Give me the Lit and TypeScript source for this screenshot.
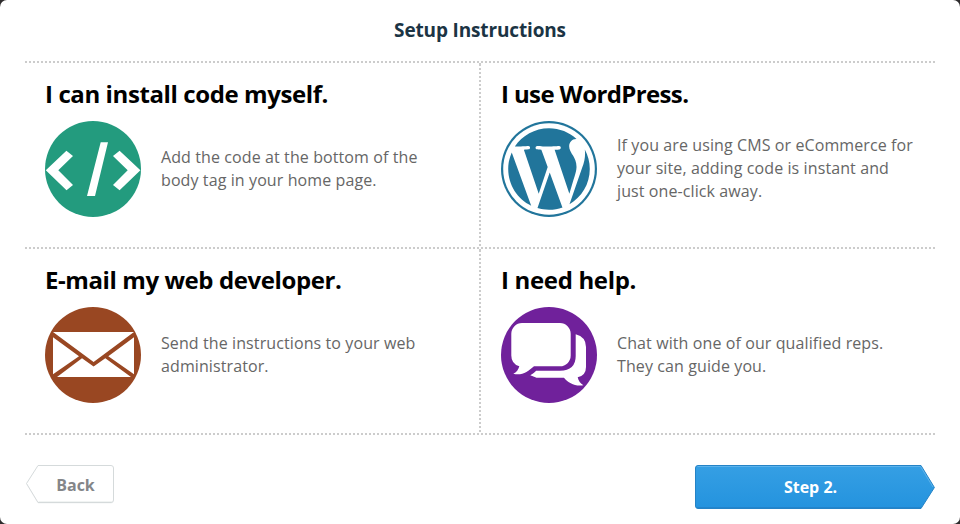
import { LitElement, html, svg, css, TemplateResult } from "lit";
import { customElement } from "lit/decorators.js";
import { styleMap } from "lit/directives/style-map.js";

const codeIcon = svg`
  <circle cx="48" cy="48" r="48" fill="#239b7e"/>
  <path fill="#fff" d="M.8 49.3 21.4 29.7 28 34.9 13.3 49.3 28 63.9 21.5 69.2ZM55.7 21.3H63L50 75H42ZM95.4 49.3 74.6 29.7 68 34.9 82.7 49.3 68 63.9 74.6 69.2Z"/>`;

const wordpressIcon = svg`
  <circle cx="48" cy="48" r="48" fill="#21759b"/>
  <circle cx="48" cy="48" r="45.8" fill="#fff"/>
  <path fill="#21759b" transform="translate(2.64 2.64) scale(3.78)" d="M21.469 6.825c.84 1.537 1.318 3.3 1.318 5.175 0 3.979-2.156 7.456-5.363 9.325l3.295-9.527c.615-1.54.82-2.771.82-3.864 0-.405-.026-.78-.07-1.11m-7.981.105c.647-.03 1.232-.105 1.232-.105.582-.075.514-.93-.067-.899 0 0-1.755.135-2.88.135-1.064 0-2.85-.15-2.85-.15-.585-.03-.661.855-.075.885 0 0 .54.061 1.125.09l1.68 4.605-2.37 7.08L5.354 6.9c.649-.03 1.234-.1 1.234-.1.585-.075.516-.93-.065-.896 0 0-1.746.138-2.874.138-.2 0-.438-.008-.69-.015C4.911 3.15 8.235 1.215 12 1.215c2.809 0 5.365 1.072 7.286 2.833-.046-.003-.091-.009-.141-.009-1.06 0-1.812.923-1.812 1.914 0 .89.513 1.643 1.06 2.531.411.72.89 1.643.89 2.977 0 .915-.354 1.994-.821 3.479l-1.075 3.585-3.9-11.61.001.014zM12 22.784c-1.059 0-2.081-.153-3.048-.437l3.237-9.406 3.315 9.087c.024.053.05.101.078.149-1.12.393-2.325.609-3.582.609M1.211 12c0-1.564.336-3.05.935-4.39L7.29 21.709C3.694 19.96 1.212 16.271 1.211 12"/>`;

const mailIcon = svg`
  <circle cx="48" cy="48" r="48" fill="#994722"/>
  <path fill="#fff" d="M8 25H89L48.6 55ZM8 30.3 34 49.3 8 67.2ZM89 30.3 63.3 49.3 89 67.2ZM12 70 37 51.3 48.6 59.6 60.3 51.3 86 70Z"/>`;

const chatIcon = svg`
  <circle cx="48" cy="48" r="48" fill="#70219b"/>
  <path fill="#fff" d="M21 16H59A10.7 10.7 0 0 1 69.7 26.7V48.6A10.7 10.7 0 0 1 59 59.3H33C27 64.5 21 69 12.3 66.8C15.5 65.3 17.5 62.5 18.3 59.2Q10.3 57 10.3 48.5V26.7A10.7 10.7 0 0 1 21 16Z"/>
  <path fill="#fff" d="M74.7 27.3Q85 30 85 40V60Q85 68.5 76.7 70.3C77.4 74 79.5 76.8 82.4 78.2C74 79.6 67.5 76 63 70.7H35.5L29.3 68.2Q32.6 66.5 35.2 63.7H59Q74.7 63.5 74.7 49Z"/>`;

interface Option { title: string; tracking: number; lines: string[]; icon: TemplateResult; }

const options: Option[] = [
  { title: "I can install code myself.", tracking: -0.4, lines: ["Add the code at the bottom of the", "body tag in your home page."], icon: codeIcon },
  { title: "I use WordPress.", tracking: -0.62, lines: ["If you are using CMS or eCommerce for", "your site, adding code is instant and", "just one-click away."], icon: wordpressIcon },
  { title: "E-mail my web developer.", tracking: -0.41, lines: ["Send the instructions to your web", "administrator."], icon: mailIcon },
  { title: "I need help.", tracking: -0.33, lines: ["Chat with one of our qualified reps.", "They can guide you."], icon: chatIcon },
];

@customElement("app-root")
export class AppRoot extends LitElement {
  static styles = css`
    :host { display: block; height: 524px; background: #2e2c2d; font-family: "Open Sans", sans-serif; }
    * { box-sizing: border-box; }
    .dialog { height: 524px; background: #fff; border-radius: 7px; padding: 0 25px; display: flex; flex-direction: column; }
    .heading { margin: 0; height: 61px; line-height: 60px; text-align: center; font-size: 19px; letter-spacing: -.15px; font-weight: 700; color: #1b3444; }
    .rule { height: 2px; flex: none; background: repeating-linear-gradient(90deg, #ccc 0 2px, transparent 2px 4px); }
    .row { height: 184px; display: grid; grid-template-columns: 454px 2px 454px; }
    .divider { background: linear-gradient(#ccc 0 1px, transparent 1px), repeating-linear-gradient(180deg, transparent 0 1px, #ccc 1px 3px, transparent 3px 4px); }
    .option { padding: 14px 20px 0; display: flex; flex-direction: column; }
    .title { margin: 0; height: 44px; line-height: 33px; font-size: 24px; font-weight: 700; color: #000; white-space: nowrap; }
    .body { display: flex; align-items: center; gap: 20px; height: 96px; }
    .icon { width: 96px; height: 96px; flex: none; display: block; }
    .text { margin: 0; padding-bottom: 1px; font-size: 16px; line-height: 23px; letter-spacing: .1px; color: #666; white-space: nowrap; }
    .line { display: block; }
    .footer { display: flex; justify-content: space-between; align-items: flex-start; padding: 30px 0 0 1px; }
    .button { position: relative; border: 0; padding: 0; background: none; font: 700 16px "Open Sans", sans-serif; }
    .back { width: 89px; height: 40px; padding-left: 10px; color: #848689; }
    .next { width: 240px; height: 44px; padding-right: 9px; color: #fff; }
    .shape { position: absolute; left: 0; top: 0; width: 100%; height: 100%; }
    .label { position: relative; }
  `;

  private option(o: Option) {
    return html`<section class="option">
      <h2 class="title" style=${styleMap({ letterSpacing: `${o.tracking}px` })}>${o.title}</h2>
      <div class="body">
        <svg class="icon" viewBox="0 0 96 96">${o.icon}</svg>
        <p class="text">${o.lines.map((l) => html`<span class="line">${l}</span>`)}</p>
      </div>
    </section>`;
  }

  private row(a: Option, b: Option) {
    return html`<div class="row">${this.option(a)}<div class="divider"></div>${this.option(b)}</div>`;
  }

  render() {
    return html`<main class="dialog">
      <h1 class="heading">Setup Instructions</h1>
      <div class="rule"></div>
      ${this.row(options[0], options[1])}
      <div class="rule"></div>
      ${this.row(options[2], options[3])}
      <div class="rule"></div>
      <footer class="footer">
        <button class="button back">
          <svg class="shape" viewBox="0 0 89 40">
            <path d="M12 1.5H85Q87.5 1.5 87.5 4V36Q87.5 38.5 85 38.5H12L.5 19.5Z" fill="#f3f5f5"/>
            <path d="M12 .5H85Q87.5 .5 87.5 3V35Q87.5 37.5 85 37.5H12L.5 18.5Z" fill="#fff" stroke="#d5dadb"/>
            <path d="M12.5 36.5H86" stroke="#f1f4f3"/>
          </svg>
          <span class="label">Back</span>
        </button>
        <button class="button next">
          <svg class="shape" viewBox="0 0 240 44">
            <defs><linearGradient id="fill" x2="0" y2="1"><stop stop-color="#359fe4"/><stop offset="1" stop-color="#2493de"/></linearGradient></defs>
            <path d="M3 .5H226L239.4 22.5 226 43.5H3Q.5 43.5 .5 41V3Q.5 .5 3 .5Z" fill="url(#fill)" stroke="#2583c6"/>
            <path d="M2.5 1.5H225.5L238 22" fill="none" stroke="#5cb3ec"/>
            <path d="M2 42.5H226" stroke="#2285cd"/>
          </svg>
          <span class="label">Step 2.</span>
        </button>
      </footer>
    </main>`;
  }
}
